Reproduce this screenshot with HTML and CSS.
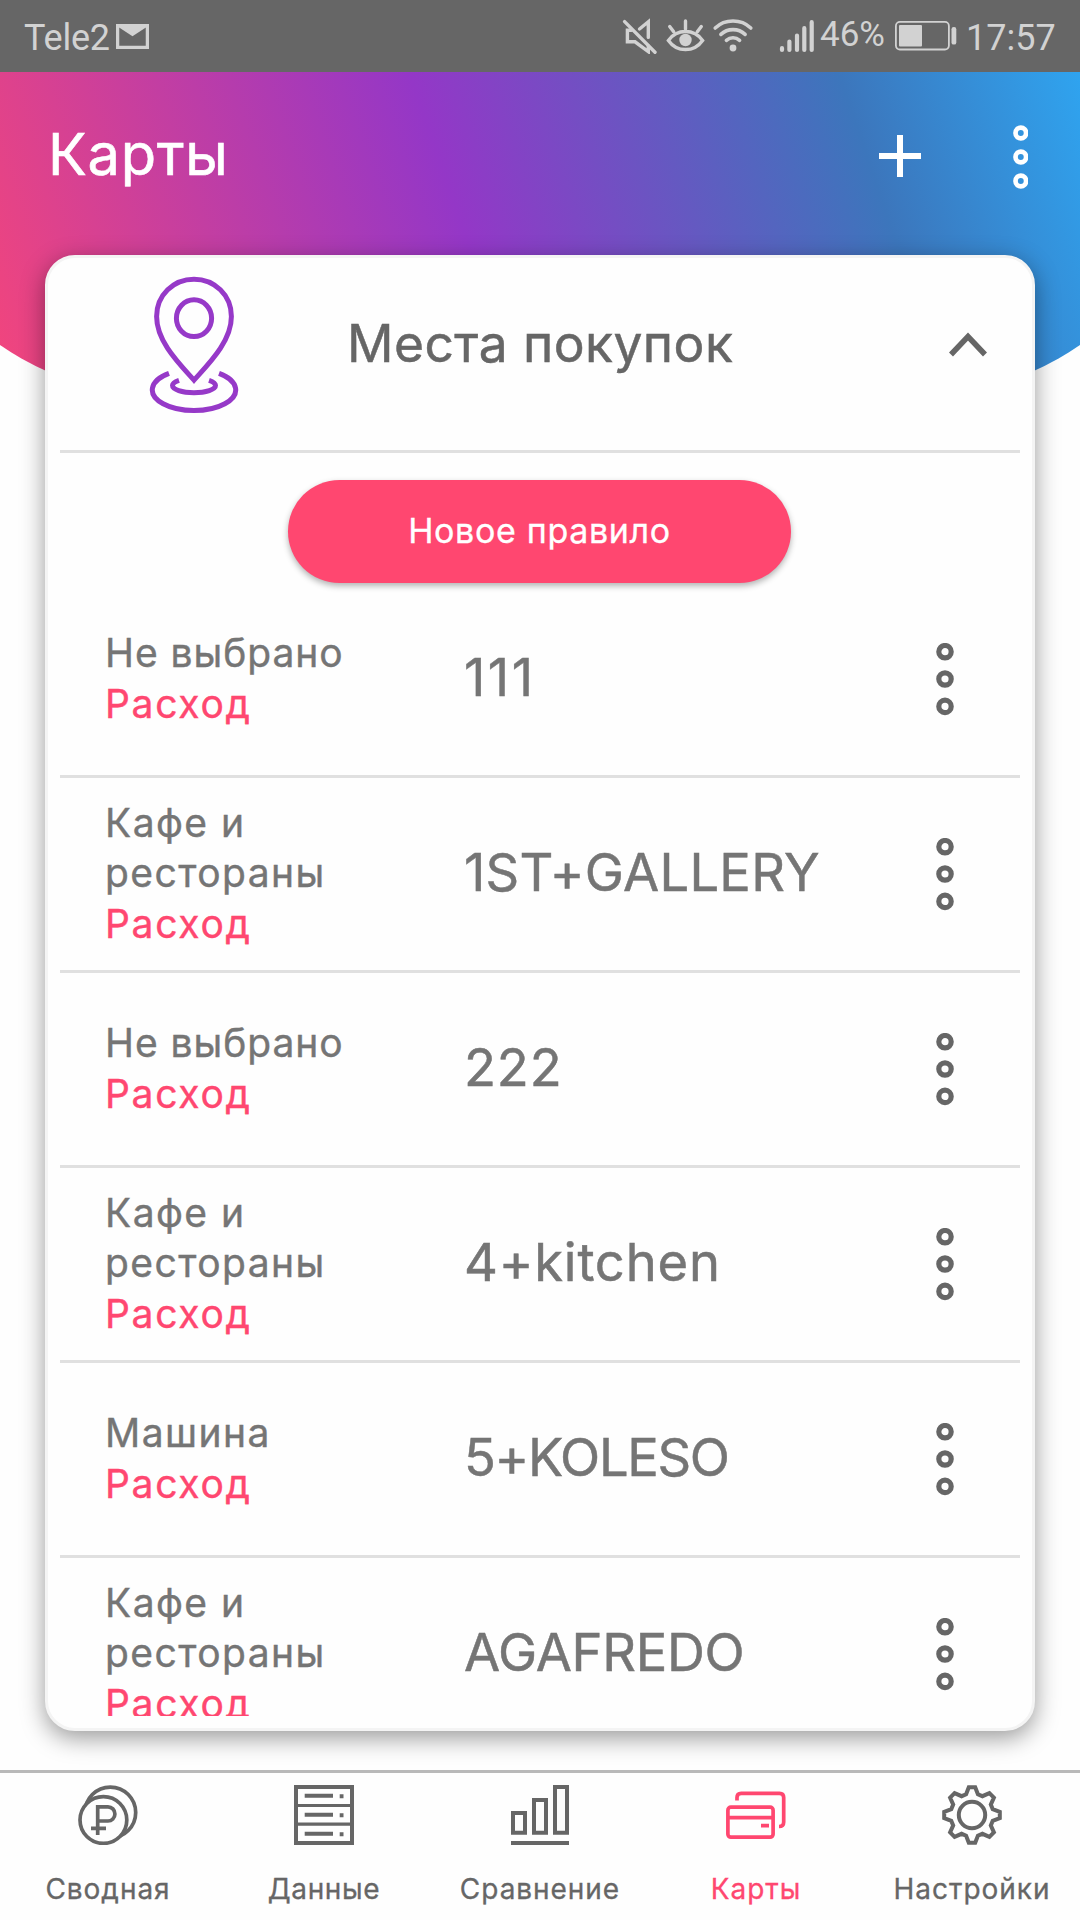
FILE: index.html
```html
<!DOCTYPE html>
<html lang="ru">
<head>
<meta charset="utf-8">
<title>Карты</title>
<link rel="stylesheet" href="styles.css">
</head>
<body>
<svg class="defs" aria-hidden="true">
  <symbol id="dots" viewBox="0 0 18 73">
    <g fill="none" stroke="currentColor" stroke-width="5.2">
      <circle cx="9" cy="8.7" r="6.2"/><circle cx="9" cy="36" r="6.2"/><circle cx="9" cy="63.4" r="6.2"/>
    </g>
  </symbol>
</svg>
<div class="screen">
  <div class="statusbar">
    <span class="carrier">Tele2</span>
    <svg class="mail" viewBox="0 0 33 25" width="33" height="25"><path d="M1.6 1.6h29.8v21.8H1.6z" fill="none" stroke="currentColor" stroke-width="3.3"/><path d="M1.6 2.4h29.8L16.5 12.3z" fill="currentColor"/></svg>
    <svg class="system-icons" viewBox="0 0 195 36" width="195" height="36" fill="none" stroke="currentColor" stroke-linecap="round">
      <g stroke-width="3.4">
        <path d="M3.6 3.6L34 34.2"/>
        <path d="M18.5 11L27.3 3.8V19.4"/>
        <path d="M10.5 12.2H6.4V23.8H14L27.3 33.6V28"/>
        <path d="M47.4 22.4C56 10.6 73 10.6 81.6 22.4C73 34.6 56 34.6 47.4 22.4z"/>
        <path d="M64.5 3v8M48.7 8.5l4 5.3M80.3 8.5l-4 5.3"/>
      </g>
      <circle cx="64.5" cy="22" r="6.2" fill="currentColor" stroke="none"/>
      <g stroke-width="3.6">
        <path d="M94.2 10C104 .7 120 .7 129.800 10"/>
        <path d="M99.9 16.4C106.5 10 117.5 10 124.1 16.4"/>
        <path d="M105.4 22.4C109.3 18.9 114.7 18.9 118.6 22.4"/>
      </g>
      <circle cx="112" cy="30" r="3.4" fill="currentColor" stroke="none"/>
      <path stroke-width="4.2" d="M161 30.2v1.700M168.400 23.600v8.300M176 17.600v14.300M183.300 10.200v21.700M190.700 4.200v27.700"/>
    </svg>
    <span class="percent">46%</span>
    <svg class="battery" viewBox="0 0 62 30" width="62" height="30"><rect x=".9" y=".9" width="53" height="27.6" rx="4" fill="none" stroke="currentColor" stroke-width="1.8"/><rect x="4" y="4" width="23" height="21.4" rx="1" fill="currentColor"/><rect x="56.5" y="6" width="4.8" height="17.6" rx="2.2" fill="currentColor"/></svg>
    <span class="clock">17:57</span>
  </div>

  <header class="appbar">
    <h1 class="title">Карты</h1>
    <svg class="add" viewBox="0 0 42 42" width="42" height="42"><path d="M0 21h42M21 0v42" stroke="currentColor" stroke-width="6"/></svg>
    <svg class="menu" width="15.6" height="64" viewBox="0 0 15.6 64" fill="none" stroke="currentColor" stroke-width="4.700"><circle cx="7.8" cy="8" r="5.3"/><circle cx="7.8" cy="32" r="5.3"/><circle cx="7.8" cy="56" r="5.3"/></svg>
  </header>

  <main class="card">
    <div class="content">
      <div class="section">
        <svg class="pin" viewBox="0 0 90 142" width="90" height="142" fill="none" stroke="currentColor" stroke-width="5">
          <path d="M45 106.200C30 89.500 7.600 67.500 7.600 42.500C7.600 21 24.500 5.200 45 5.200S82.400 21 82.400 42.500C82.400 67.500 60 89.500 45 106.200z"/>
          <ellipse cx="45" cy="44.200" rx="17.600" ry="18.400"/>
          <path d="M20 99.300A41.700 20.700 0 1 0 70 99.300"/>
          <path d="M30 106.300A21.500 7.200 0 1 0 60 106.300"/>
        </svg>
        <h2 class="section-title">Места покупок</h2>
        <svg class="chevron" viewBox="0 0 38 26" width="38" height="26"><path d="M2 22.500L19 4.500L36 22.500" fill="none" stroke="currentColor" stroke-width="5.500"/></svg>
      </div>
      <div class="action"><button class="new-rule">Новое правило</button></div>
      <ul class="rules">
        <li class="rule">
          <div class="info"><span class="category tight">Не выбрано</span><span class="kind">Расход</span></div>
          <div class="value ones">111</div><svg class="more"><use href="#dots"/></svg>
        </li>
        <li class="rule">
          <div class="info"><span class="category">Кафе и рестораны</span><span class="kind">Расход</span></div>
          <div class="value gallery">1ST+GALLERY</div><svg class="more"><use href="#dots"/></svg>
        </li>
        <li class="rule">
          <div class="info"><span class="category tight">Не выбрано</span><span class="kind">Расход</span></div>
          <div class="value twos">222</div><svg class="more"><use href="#dots"/></svg>
        </li>
        <li class="rule">
          <div class="info"><span class="category">Кафе и рестораны</span><span class="kind">Расход</span></div>
          <div class="value kitchen">4+kitchen</div><svg class="more"><use href="#dots"/></svg>
        </li>
        <li class="rule">
          <div class="info"><span class="category">Машина</span><span class="kind">Расход</span></div>
          <div class="value koleso">5+KOLESO</div><svg class="more"><use href="#dots"/></svg>
        </li>
        <li class="rule">
          <div class="info"><span class="category">Кафе и рестораны</span><span class="kind">Расход</span></div>
          <div class="value agafredo">AGAFREDO</div><svg class="more"><use href="#dots"/></svg>
        </li>
      </ul>
    </div>
  </main>

  <nav class="tabs">
    <a class="tab">
      <svg class="tab-icon" viewBox="0 0 60 60" fill="none" stroke="currentColor" stroke-width="3.700"><circle cx="32.300" cy="27.500" r="25.400"/><circle cx="25.400" cy="35" r="23.400" fill="#fefefe"/><path d="M19.700 50V21.800H30a6.900 7.100 0 0 1 0 14.200H19.700M13 43.300H28"/></svg>
      <span class="tab-label">Сводная</span>
    </a>
    <a class="tab">
      <svg class="tab-icon" viewBox="0 0 60 60" fill="none" stroke="currentColor"><path d="M2 2h56v56H2z" stroke-width="4"/><path d="M2 20.500h56M2 39.200h56" stroke-width="3.200"/><path d="M10.700 10.700H39M10.700 29.700H39M10.700 48.700H39M45.700 11.200h3.800M45.700 30.200h3.800M45.700 49.200h3.800" stroke-width="4"/></svg>
      <span class="tab-label narrow">Данные</span>
    </a>
    <a class="tab">
      <svg class="tab-icon" viewBox="0 0 60 60" fill="none" stroke="currentColor" stroke-width="4"><path d="M3 28h12v19.700H3zM24 15h12v32.700H24zM45 2h12v45.700H45zM1 58h58"/></svg>
      <span class="tab-label">Сравнение</span>
    </a>
    <a class="tab active">
      <svg class="tab-icon" viewBox="0 0 60 60" fill="none" stroke="currentColor" stroke-width="3.700"><rect x="1.900" y="22.200" width="45.200" height="30" rx="3"/><path d="M2 32.700h45M35 40.700h8"/><path d="M11 15.500V12.500Q11 8.300 15.200 8.300H53.500Q57.700 8.300 57.700 12.500V37Q57.700 41.500 53 41.500"/></svg>
      <span class="tab-label">Карты</span>
    </a>
    <a class="tab">
      <svg class="tab-icon" viewBox="-30 -30 60 60" fill="none" stroke="currentColor" stroke-width="4"><circle r="13.200"/><path d="M-5.900-20.700L-3.200-27.800H3.200L5.900-20.700L10.400-18.800L17.400-21.900L21.900-17.400L18.800-10.400L20.700-5.900L27.800-3.200V3.200L20.700 5.900L18.800 10.400L21.900 17.400L17.400 21.900L10.400 18.800L5.900 20.700L3.200 27.800H-3.200L-5.900 20.700L-10.400 18.800L-17.400 21.900L-21.900 17.400L-18.800 10.400L-20.700 5.900L-27.800 3.200V-3.200L-20.700-5.900L-18.800-10.400L-21.900-17.400L-17.400-21.900L-10.400-18.800z"/></svg>
      <span class="tab-label">Настройки</span>
    </a>
  </nav>
</div>
</body>
</html>
```
FILE: styles.css
```css
* { box-sizing: border-box; }
body { margin: 0; background: #fefefe; font-family: Inter, "Liberation Sans", sans-serif; color: #666; }
h1, h2, ul { margin: 0; padding: 0; font-weight: 400; list-style: none; }
svg { display: block; flex: none; }
.defs { position: absolute; width: 0; height: 0; }
.screen { position: relative; width: 1080px; height: 1920px; display: flex; flex-direction: column; overflow: hidden; }

/* Curved gradient behind the app bar and the top of the card */
.screen::before {
  content: ""; position: absolute; left: -48px; top: 52px; width: 1176px; height: 400px; z-index: -1;
  background: linear-gradient(71.2deg, #ff4772 0%, #9437c7 44.7%, #3c76bc 77.4%, #2caefb 100%);
  border-radius: 0 0 588px 588px / 0 0 177px 177px;
}

.statusbar { height: 72px; display: flex; align-items: flex-start; padding-left: 24px; background: #666; color: #d2d2d2; font: 36px/44px Roboto, sans-serif; }
.carrier { width: 92px; padding-top: 16px; letter-spacing: -.2px; }
.mail { margin-top: 24px; }
.system-icons { margin: 18px 0 0 472px; }
.percent { width: 68px; margin-left: 4px; padding-top: 13px; font-size: 35px; }
.battery { margin: 21px 0 0 7px; }
.clock { margin-left: 9px; padding-top: 16px; }

.appbar { height: 183px; display: flex; align-items: flex-start; padding-left: 48px; color: #fff; }
.title { width: 831px; padding-top: 46px; font-size: 57.8px; line-height: 72px; letter-spacing: .7px; -webkit-text-stroke: .6px; }
.add { margin-top: 63px; }
.menu { margin: 52.500px 0 0 91.700px; }

.card {
  width: 990px; height: 1476px; margin-left: 45px; padding: 12px;
  border: 3px solid #f4f4f4; border-radius: 30px; background: #fefefe;
  box-shadow: 0 7px 24px rgba(0, 0, 0, .4);
}
.content { height: 100%; overflow: hidden; }
.section { height: 183px; display: flex; align-items: flex-start; border-bottom: 3px solid #e0e0e0; }
.pin { margin: 4px 0 0 89px; color: #9639c8; }
.section-title { width: 600px; padding: 38px 0 0 108px; font-size: 51.5px; line-height: 70px; letter-spacing: .45px; white-space: nowrap; -webkit-text-stroke: .5px; }
.chevron { margin: 61.500px 0 0 110px; }
.action { height: 130px; padding: 27px 1px 0 0; display: flex; justify-content: center; }
.new-rule { width: 503px; height: 103px; padding: 0 0 2px; border: 0; border-radius: 52px; background: #ff4770; color: #fff; font: 34px/40px Inter, sans-serif; letter-spacing: .66px; box-shadow: 0 3px 6px rgba(0, 0, 0, .3); -webkit-text-stroke: .3px; }

.rule { height: 195px; display: flex; align-items: center; padding: 0 66px 0 45px; border-bottom: 3px solid #e0e0e0; color: #757575; }
.info { width: 359px; padding: 0 110px 1px 0; display: flex; flex-direction: column; font-size: 39px; line-height: 50.5px; letter-spacing: 1.45px; -webkit-text-stroke: .4px; }
.category.tight { letter-spacing: .95px; white-space: nowrap; }
.kind { color: #ff4770; letter-spacing: 1.7px; }
.value { flex: 1; padding-bottom: 4px; font-size: 52.5px; line-height: 64px; white-space: nowrap; -webkit-text-stroke: .5px; }
.ones { letter-spacing: 2.5px; }
.gallery { letter-spacing: .25px; }
.twos { letter-spacing: .8px; }
.kitchen { letter-spacing: .8px; }
.koleso { letter-spacing: -1.35px; }
.agafredo { letter-spacing: -.35px; }
.more { width: 18px; height: 73px; color: #666; }

.tabs { height: 150px; margin-top: auto; display: flex; background: #fefefe; border-top: 3px solid #b9b9b9; position: relative; }
.tab { flex: 1; display: flex; flex-direction: column; align-items: center; padding-top: 12px; }
.tab-icon { width: 60px; height: 60px; }
.tab-label { margin-top: 24px; font-size: 28px; line-height: 40px; letter-spacing: .95px; -webkit-text-stroke: .3px; }
.tab-label.narrow { letter-spacing: .66px; }
.active { color: #ff4770; }
```
